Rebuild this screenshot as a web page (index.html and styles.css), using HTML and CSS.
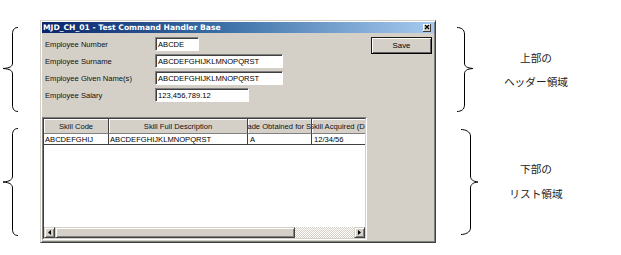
FILE: index.html
```html
<!DOCTYPE html>
<html lang="ja">
<head>
<meta charset="utf-8">
<title>MJD_CH_01</title>
<link rel="stylesheet" href="styles.css">
</head>
<body>
<div class="page">
  <div class="side side-left">
    <svg class="brace brace-top" width="40" height="85" viewBox="0 0 40 85"><path d="M18,0.5 C14.5,0.5 12.5,2.5 12.5,7 L12.5,36 C12.5,39.5 10,41 3,41.5 C10,42 12.5,43.5 12.5,47 L12.5,78 C12.5,82.5 14.5,84.5 18,84.5"/></svg>
    <svg class="brace brace-bottom" width="40" height="108" viewBox="0 0 40 108"><path d="M18,0.5 C14.5,0.5 12.5,2.5 12.5,7 L12.5,48 C12.5,51.5 10,53.5 3,54 C10,54.5 12.5,56.5 12.5,60 L12.5,101 C12.5,105.5 14.5,107.5 18,107.5"/></svg>
  </div>

  <div class="window">
    <div class="titlebar">
      <span class="title">MJD_CH_01 - Test Command Handler Base</span>
      <span class="close"><svg width="6" height="6" viewBox="0 0 6 6"><path d="M1,1 L5,5 M5,1 L1,5"/></svg></span>
    </div>
    <div class="wbody">
      <div class="header-area">
        <div class="fields">
          <div class="row"><span class="label">Employee Number</span><div class="input w-num">ABCDE</div></div>
          <div class="row"><span class="label">Employee Surname</span><div class="input w-long">ABCDEFGHIJKLMNOPQRST</div></div>
          <div class="row"><span class="label">Employee Given Name(s)</span><div class="input w-long">ABCDEFGHIJKLMNOPQRST</div></div>
          <div class="row"><span class="label">Employee Salary</span><div class="input w-sal">123,456,789.12</div></div>
        </div>
        <div class="save">Save</div>
      </div>
      <div class="grid">
        <div class="ginner">
          <div class="ghead">
            <div class="hc c1"><span>Skill Code</span></div>
            <div class="hc c2"><span>Skill Full Description</span></div>
            <div class="hc c3"><span>Grade Obtained for Skill</span></div>
            <div class="hc c4 hc-left"><span>Skill Acquired (Date)</span></div>
          </div>
          <div class="grow">
            <div class="dc c1">ABCDEFGHIJ</div>
            <div class="dc c2">ABCDEFGHIJKLMNOPQRST</div>
            <div class="dc c3">A</div>
            <div class="dc c4">12/34/56</div>
          </div>
          <div class="gempty"></div>
          <div class="hscroll">
            <div class="sbtn"><svg width="3" height="5" viewBox="0 0 3 5"><path d="M3,0 L3,5 L0,2.5 Z"/></svg></div>
            <div class="thumb"></div>
            <div class="track"></div>
            <div class="sbtn"><svg width="3" height="5" viewBox="0 0 3 5"><path d="M0,0 L0,5 L3,2.5 Z"/></svg></div>
          </div>
        </div>
      </div>
    </div>
  </div>

  <div class="side side-right">
    <div class="note note-top">
      <svg class="brace" width="50" height="85" viewBox="0 0 50 85"><path d="M21,0.5 C25,0.5 28.5,2.5 28.5,7 L28.5,36 C28.5,39.5 31,41 37,41.5 C31,42 28.5,43.5 28.5,47 L28.5,78 C28.5,82.5 25,84.5 21,84.5"/></svg>
      <div class="ntext nt-top"><span>上部の</span><span>ヘッダー領域</span></div>
    </div>
    <div class="note note-bottom">
      <svg class="brace" width="50" height="106" viewBox="0 0 50 106"><path d="M25,0.5 C29,0.5 34.5,2.5 34.5,7 L34.5,47 C34.5,50.5 37,52.5 42,53 C37,53.5 34.5,55.5 34.5,59 L34.5,99 C34.5,103.5 29,105.5 25,105.5"/></svg>
      <div class="ntext nt-bottom"><span>下部の</span><span>リスト領域</span></div>
    </div>
  </div>
</div>
</body>
</html>
```

FILE: styles.css
```css
html, body {
  margin: 0;
  padding: 0;
  background: #fff;
}

.page {
  display: flex;
  width: 621px;
  height: 255px;
  overflow: hidden;
}

/* braces */
.brace path {
  fill: none;
  stroke: #000;
  stroke-width: 1;
}

.side {
  display: flex;
  flex-direction: column;
  box-sizing: border-box;
  padding-top: 27px;
}

.side-left {
  width: 40px;
  flex: none;
}

.brace-top {
  display: block;
  margin-bottom: 16px;
}

.brace-bottom {
  display: block;
}

.side-right {
  width: 185px;
  flex: none;
}

.note {
  display: flex;
}

.note-top {
  height: 85px;
}

.note-bottom {
  height: 106px;
  margin-top: 17px;
}

.note .brace {
  display: block;
  flex: none;
}

.ntext {
  width: 100px;
  display: flex;
  flex-direction: column;
  justify-content: center;
  align-items: center;
  font-family: "Noto Sans CJK JP", sans-serif;
  font-size: 10.7px;
  color: #222;
}

.nt-top {
  line-height: 24px;
}

.nt-bottom {
  line-height: 25px;
  padding-bottom: 3px;
  box-sizing: border-box;
}

/* window */
.window {
  width: 396px;
  height: 223px;
  margin-top: 20px;
  flex: none;
  box-sizing: border-box;
  background: #d4d0c8;
  border: 1px solid;
  border-color: #d4d0c8 #404040 #404040 #d4d0c8;
  box-shadow: inset 1px 1px #fff, inset -1px -1px #808080;
  padding: 1px;
  display: flex;
  flex-direction: column;
  font-family: "Liberation Sans", Arial, sans-serif;
  font-size: 7.6px;
  color: #000;
}

.titlebar {
  height: 11px;
  flex: none;
  display: flex;
  align-items: center;
  background: linear-gradient(90deg, #0a246a 0%, #3a6ea5 45%, #a6caf0 100%);
  padding-left: 1px;
}

.title {
  color: #fff;
  font-family: "DejaVu Sans", Verdana, sans-serif;
  font-weight: bold;
  font-size: 7.6px;
  white-space: nowrap;
}

.close {
  margin-left: auto;
  margin-right: 3px;
  width: 8px;
  height: 8px;
  box-sizing: border-box;
  background: #d4d0c8;
  border-right: 1px solid #404040;
  border-bottom: 1px solid #404040;
  box-shadow: inset 1px 1px #fff;
  display: flex;
  align-items: center;
  justify-content: center;
}

.close path {
  stroke: #000;
  stroke-width: 1.2;
}

.wbody {
  flex: 1;
  display: flex;
  flex-direction: column;
  padding: 4px 2px 1px 0;
  min-height: 0;
}

.header-area {
  display: flex;
  align-items: flex-start;
  padding-left: 3px;
  height: 65px;
  margin-bottom: 15px;
  flex: none;
}

.fields {
  display: flex;
  flex-direction: column;
  gap: 3px;
}

.row {
  display: flex;
  align-items: center;
  height: 14px;
}

.label {
  width: 110px;
  color: #111;
}

.input {
  height: 14px;
  box-sizing: border-box;
  background: #fff;
  border: 1px solid;
  border-color: #808080 #fff #fff #808080;
  box-shadow: inset 1px 1px #404040;
  padding-left: 2px;
  display: flex;
  align-items: center;
  white-space: nowrap;
  overflow: hidden;
}

.w-num { width: 44px; }
.w-long { width: 128px; }
.w-sal { width: 94px; }

.save {
  margin-left: auto;
  width: 61px;
  height: 17px;
  box-sizing: border-box;
  border: 1px solid #1a1a1a;
  border-right-color: #000;
  border-bottom-color: #000;
  box-shadow: inset 1px 1px #fff, inset -1px -1px #606060;
  display: flex;
  align-items: center;
  justify-content: center;
  font-size: 7.8px;
}

/* grid */
.grid {
  flex: 1;
  width: 325px;
  box-sizing: border-box;
  border: 1px solid;
  border-color: #808080 #fff #fff #808080;
  display: flex;
  min-height: 0;
}

.ginner {
  flex: 1;
  min-width: 0;
  border: 1px solid;
  border-color: #404040 #d4d0c8 #d4d0c8 #404040;
  background: #fff;
  display: flex;
  flex-direction: column;
  overflow: hidden;
}

.ghead, .grow {
  display: flex;
  flex: none;
}

.c1 { width: 65px; }
.c2 { width: 139px; }
.c3 { width: 64px; }
.c4 { width: 64px; }

.hc {
  flex: none;
  height: 15px;
  box-sizing: border-box;
  background: #d4d0c8;
  border-right: 1px solid #404040;
  border-bottom: 1px solid #808080;
  box-shadow: inset 1px 1px #fff;
  display: flex;
  justify-content: center;
  align-items: center;
  overflow: hidden;
  white-space: nowrap;
  color: #111;
}

.hc span {
  flex: none;
}

.hc-left {
  justify-content: flex-start;
}

.hc-left span {
  margin-left: -3px;
}

.dc {
  flex: none;
  height: 11px;
  box-sizing: border-box;
  border-right: 1px solid #404040;
  border-bottom: 1px solid #404040;
  padding-left: 1px;
  display: flex;
  align-items: center;
  white-space: nowrap;
  overflow: hidden;
}

.dc.c3, .dc.c4 {
  padding-left: 2px;
}

.gempty {
  flex: 1;
}

.hscroll {
  flex: none;
  height: 11px;
  display: flex;
}

.sbtn, .thumb {
  box-sizing: border-box;
  background: #d4d0c8;
  border: 1px solid;
  border-color: #d4d0c8 #404040 #404040 #d4d0c8;
  box-shadow: inset 1px 1px #fff, inset -1px -1px #808080;
}

.sbtn {
  width: 11px;
  flex: none;
  display: flex;
  align-items: center;
  justify-content: center;
}

.sbtn path {
  fill: #000;
}

.thumb {
  width: 240px;
  flex: none;
}

.track {
  flex: 1;
  background: repeating-conic-gradient(#d4d0c8 0 25%, #fff 0 50%) 0 0 / 2px 2px;
}
```
